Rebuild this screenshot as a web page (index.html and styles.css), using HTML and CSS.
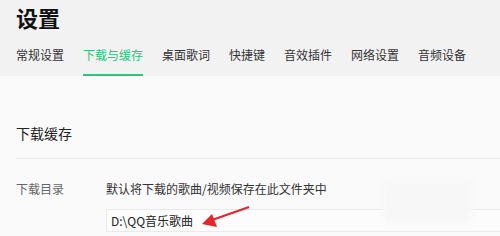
FILE: index.html
```html
<!DOCTYPE html>
<html lang="zh-CN">
<head>
  <meta charset="UTF-8" />
  <title>设置</title>
  <link rel="stylesheet" href="styles.css">
</head>
<body>
  <div class="header">
    <h1>设置</h1>
    <div class="tabs">
      <div class="tab">常规设置</div>
      <div class="tab active">下载与缓存</div>
      <div class="tab">桌面歌词</div>
      <div class="tab">快捷键</div>
      <div class="tab">音效插件</div>
      <div class="tab">网络设置</div>
      <div class="tab">音频设备</div>
    </div>
  </div>

  <div class="content">
    <h2>下载缓存</h2>
    <div class="row">
      <div class="label">下载目录</div>
      <div class="field">
        <div class="desc">默认将下载的歌曲/视频保存在此文件夹中</div>
        <div class="path">D:\QQ音乐歌曲</div>
      </div>
    </div>

    <div class="blur"></div>
    <svg class="arrow" width="52" height="26" viewBox="0 0 52 26">
      <line x1="49" y1="3" x2="12" y2="16" stroke="#e8242a" stroke-width="2" />
      <polygon points="2,20 12,10 17,23" fill="#e8242a" />
    </svg>
  </div>
</body>
</html>
```

FILE: styles.css
```css
body {
  margin: 0;
  background-color: #fafafa;
  font-family: "Noto Sans CJK SC", "Noto Sans", sans-serif;
  color: #333;
  overflow: hidden;
}

.header {
  background-color: #f2f2f2;
  padding: 0 16px;
}

h1 {
  margin: 0;
  font-size: 22px;
  line-height: 34px;
  font-weight: bold;
  color: #111;
}

.tabs {
  display: flex;
  gap: 19px;
}

.tab {
  font-size: 12px;
  line-height: 20px;
  padding: 11px 0 9px;
  border-bottom: 2px solid transparent;
  color: #333;
}

.tab.active {
  color: #31c27c;
  border-bottom-color: #31c27c;
}

.content {
  position: relative;
  padding: 47px 0 0 16px;
}

h2 {
  margin: 0;
  font-size: 14px;
  line-height: 20px;
  font-weight: normal;
  color: #222;
  padding-bottom: 15px;
  border-bottom: 1px solid #ececec;
}

.row {
  display: flex;
  margin-top: 21px;
}

.label {
  width: 90px;
  font-size: 12px;
  line-height: 18px;
  color: #666;
}

.field {
  flex: 1;
}

.desc {
  font-size: 12px;
  line-height: 18px;
  color: #333;
}

.path {
  margin-top: 11px;
  height: 21px;
  padding-left: 4px;
  font-size: 12px;
  line-height: 21px;
  color: #222;
  background: #fcfcfc;
  border: 1px solid #eaeaea;
  border-right: none;
}

.blur {
  position: absolute;
  left: 383px;
  top: 104px;
  width: 89px;
  height: 43px;
  background: #f7f7f7;
  filter: blur(3px);
}

.arrow {
  position: absolute;
  left: 200px;
  top: 128px;
}
```
